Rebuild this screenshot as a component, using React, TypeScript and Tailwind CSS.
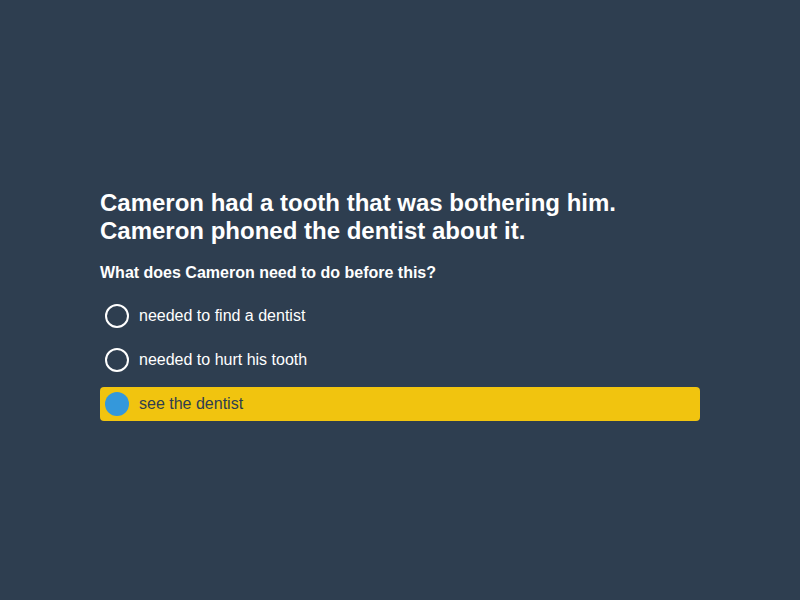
import React from "react";

const options = [
  { text: "needed to find a dentist", selected: false },
  { text: "needed to hurt his tooth", selected: false },
  { text: "see the dentist", selected: true },
];

export default function App() {
  return (
    <div
      className="w-[800px] h-[600px] bg-[#2e3e50] flex items-center justify-center"
      style={{ fontFamily: '"Liberation Sans", Arial, sans-serif' }}
    >
      <div className="w-[600px] pt-[10px]">
        <h1 className="text-[24px] leading-[28px] font-bold text-white">
          Cameron had a tooth that was bothering him.
          <br />
          Cameron phoned the dentist about it.
        </h1>
        <p className="mt-[18px] text-[16px] leading-[20px] font-bold text-white">
          What does Cameron need to do before this?
        </p>
        <div className="mt-[16px] flex flex-col gap-[10px]">
          {options.map((o) => (
            <div
              key={o.text}
              className={
                o.selected
                  ? "h-[34px] flex items-center rounded-[4px] bg-[#f1c40f] px-[5px]"
                  : "h-[34px] flex items-center rounded-[4px] px-[5px]"
              }
            >
              {o.selected ? (
                <span className="w-[24px] h-[24px] rounded-full bg-[#3498db] shrink-0" />
              ) : (
                <span className="w-[24px] h-[24px] rounded-full border-2 border-white shrink-0" />
              )}
              <span
                className={
                  o.selected
                    ? "ml-[10px] text-[16px] text-[#2e3e50]"
                    : "ml-[10px] text-[16px] text-white"
                }
              >
                {o.text}
              </span>
            </div>
          ))}
        </div>
      </div>
    </div>
  );
}
